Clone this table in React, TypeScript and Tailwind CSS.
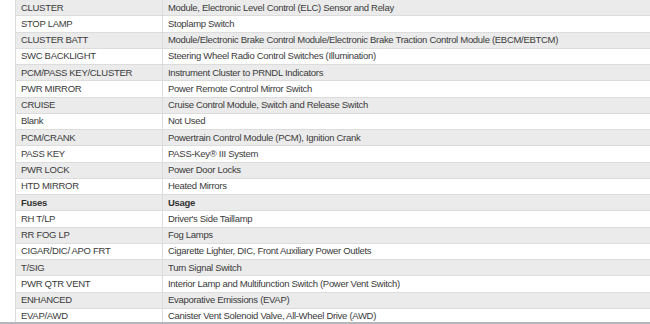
const rows: [string, string][] = [
  ['CLUSTER', 'Module, Electronic Level Control (ELC) Sensor and Relay'],
  ['STOP LAMP', 'Stoplamp Switch'],
  ['CLUSTER BATT', 'Module/Electronic Brake Control Module/Electronic Brake Traction Control Module (EBCM/EBTCM)'],
  ['SWC BACKLIGHT', 'Steering Wheel Radio Control Switches (Illumination)'],
  ['PCM/PASS KEY/CLUSTER', 'Instrument Cluster to PRNDL Indicators'],
  ['PWR MIRROR', 'Power Remote Control Mirror Switch'],
  ['CRUISE', 'Cruise Control Module, Switch and Release Switch'],
  ['Blank', 'Not Used'],
  ['PCM/CRANK', 'Powertrain Control Module (PCM), Ignition Crank'],
  ['PASS KEY', 'PASS-Key® III System'],
  ['PWR LOCK', 'Power Door Locks'],
  ['HTD MIRROR', 'Heated Mirrors'],
  ['Fuses', 'Usage'],
  ['RH T/LP', "Driver's Side Taillamp"],
  ['RR FOG LP', 'Fog Lamps'],
  ['CIGAR/DIC/ APO FRT', 'Cigarette Lighter, DIC, Front Auxiliary Power Outlets'],
  ['T/SIG', 'Turn Signal Switch'],
  ['PWR QTR VENT', 'Interior Lamp and Multifunction Switch (Power Vent Switch)'],
  ['ENHANCED', 'Evaporative Emissions (EVAP)'],
  ['EVAP/AWD', 'Canister Vent Solenoid Valve, All-Wheel Drive (AWD)'],
];

export default function App() {
  return (
    <div className="w-[650px] h-[324px] bg-white flex flex-col overflow-hidden font-['Liberation_Sans',Arial,sans-serif] text-[9.5px] tracking-[-0.3px] text-[#3a3a3a]">
      <div className="flex-1 overflow-hidden pl-[15px]">
        <div className="border-l border-[#dcdcdc]">
          {rows.map(([fuse, usage], i) => {
            const head = fuse === 'Fuses';
            return (
              <div
                key={i}
                className={`grid grid-cols-[147px_1fr] h-[16.25px] border-b border-[#dcdcdc] ${i % 2 === 0 ? 'bg-[#ebebeb]' : 'bg-white'} ${head ? 'font-bold text-[#333]' : ''}`}
              >
                <div className="flex items-center pl-[5px] border-r border-[#dcdcdc] whitespace-nowrap">{fuse}</div>
                <div className="flex items-center pl-[5px] whitespace-nowrap">{usage}</div>
              </div>
            );
          })}
        </div>
      </div>
      <div className="h-[2px] bg-[#b3b7bb]" />
    </div>
  );
}
